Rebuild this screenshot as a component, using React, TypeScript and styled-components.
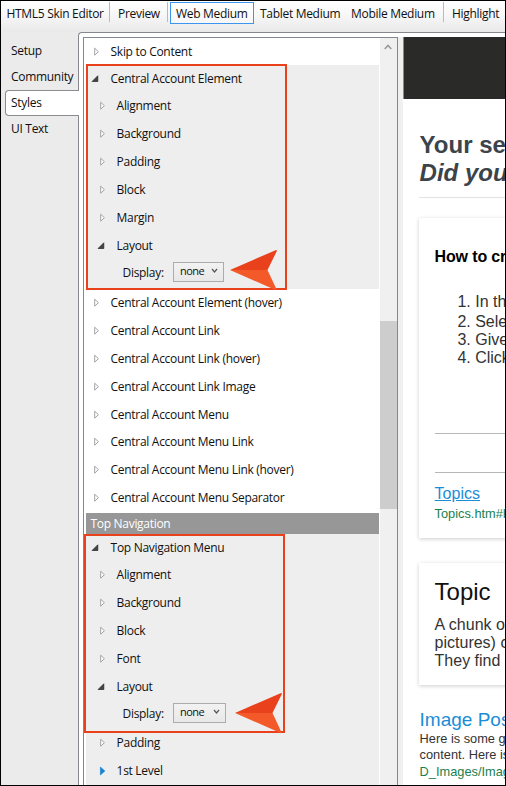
import React from "react";
import styled, { createGlobalStyle } from "styled-components";

const Global = createGlobalStyle`
  * { box-sizing: border-box; }
  body { margin: 0; background: #fff; overflow: hidden; }
`;

const Window = styled.div`
  position: relative;
  width: 506px;
  height: 786px;
  border: 1px solid #000;
  background: #ebebeb;
  overflow: hidden;
  display: flex;
  flex-direction: column;
  font: 12px/16px "Open Sans", "Noto Sans", sans-serif;
  color: #101010;
`;

const Toolbar = styled.div`
  display: flex;
  flex: none;
  height: 31px;
  padding: 1px 0 0 1px;
  background: linear-gradient(#fff, #f7f7f7 45%, #e9e9e9);
`;

const ToolItem = styled.div<{ $w: number; $active?: boolean; $sep?: boolean; $pad: number }>`
  flex: none;
  width: ${(p) => p.$w}px;
  height: ${(p) => (p.$active ? 22 : 20)}px;
  padding-left: ${(p) => p.$pad}px;
  padding-top: ${(p) => (p.$active ? 3 : 4)}px;
  border: ${(p) => (p.$active ? "1px solid #3c96f0" : "none")};
  border-right: ${(p) => (p.$active ? "1px solid #3c96f0" : p.$sep ? "1px solid #b6bbc1" : "none")};
  background: ${(p) => (p.$active ? "linear-gradient(#fff, #f7f7f7)" : "none")};
  white-space: nowrap;
`;

const ToolGap = styled.div`
  flex: none;
  width: 2px;
`;

const Text = styled.span<{ $ls: number }>`
  letter-spacing: ${(p) => p.$ls}px;
  white-space: nowrap;
`;

const Body = styled.div`
  display: flex;
  flex: 1;
  min-height: 0;
`;

const Tabs = styled.div`
  flex: none;
  width: 77px;
  padding: 6px 0 0 4px;
`;

const Tab = styled.div<{ $active?: boolean }>`
  position: relative;
  z-index: 1;
  height: 26px;
  width: ${(p) => (p.$active ? 74 : 73)}px;
  padding: ${(p) => (p.$active ? "4px 0 0 5px" : "5px 0 0 6px")};
  border: ${(p) => (p.$active ? "1px solid #8b8c90" : "none")};
  border-right: none;
  border-radius: 4px 0 0 4px;
  background: ${(p) => (p.$active ? "#fff" : "none")};
`;

const Content = styled.div`
  flex: 1;
  display: flex;
  min-width: 0;
  padding: 4px 0 0 4px;
  border-top: 1px solid #85878c;
  border-left: 1px solid #85878c;
  border-top-left-radius: 4px;
  background: #fff;
`;

const Tree = styled.div`
  flex: none;
  display: flex;
  width: 315px;
  border: 1px solid #828790;
  border-bottom: none;
  background: #fff;
`;

const TreeList = styled.div`
  flex: none;
  width: 295px;
  padding-left: 2px;
`;

const Row = styled.div<{ $h: number; $level: number; $shade?: boolean }>`
  display: flex;
  align-items: center;
  height: ${(p) => p.$h}px;
  padding-left: ${(p) => (p.$level === 1 ? 5 : 11)}px;
  background: ${(p) => (p.$shade ? "#eee" : "#fff")};
`;

const Marker = styled.svg`
  flex: none;
  width: 10px;
  height: 10px;
  margin-right: 9.6px;
`;

const Header = styled.div`
  height: 21px;
  margin-top: 1px;
  padding: 3px 0 0 4.5px;
  background: #979797;
  color: #fff;
`;

const FieldRow = styled.div<{ $h: number }>`
  display: flex;
  height: ${(p) => p.$h}px;
  padding: 2px 0 0 36.5px;
  background: #eee;
`;

const FieldLabel = styled.div`
  width: 50.5px;
  padding-top: 3px;
`;

const Select = styled.div<{ $w: number }>`
  display: flex;
  justify-content: space-between;
  width: ${(p) => p.$w}px;
  height: 20px;
  padding: 0 5px 0 6px;
  border: 1px solid #acacac;
  background: linear-gradient(#f2f2f2, #e8e8e8);
  font-size: 11px;
`;

const Chevron = styled.svg`
  width: 7px;
  height: 6px;
  margin-top: 5px;
`;

const Scrollbar = styled.div`
  flex: none;
  width: 18px;
  padding: 6px 0 0 1px;
  border-left: 1px solid #fff;
  background: #f0f0f0;
`;

const ScrollArrow = styled.svg`
  display: block;
  width: 8px;
  height: 6px;
  margin-left: 3px;
`;

const Thumb = styled.div`
  width: 17px;
  height: 188px;
  margin: 271px 0 0 -1px;
  background: #cdcdcd;
`;

const Splitter = styled.div`
  flex: none;
  width: 5px;
  background: #f0f0f0;
`;

const Preview = styled.div`
  flex: 1;
  min-width: 0;
  overflow: hidden;
  background: #fff;
  font-family: "Liberation Sans", Arial, sans-serif;
  color: #333;
  white-space: nowrap;
`;

const Banner = styled.div`
  height: 62px;
  border-left: 1px solid #8a8a8a;
  background: #2a2a28;
`;

const Page = styled.div`
  width: 300px;
  padding: 32px 0 0 16px;
`;

const Title = styled.h1`
  margin: 0;
  padding: 0 0 10px 0.6px;
  border-bottom: 1px solid #e2e2e2;
  color: #3b444b;
  font-size: 24px;
  line-height: 28px;
`;

const Card = styled.div<{ $h: number; $mt: number; $pt: number }>`
  height: ${(p) => p.$h}px;
  margin-top: ${(p) => p.$mt}px;
  padding: ${(p) => p.$pt}px 0 0 15.6px;
  background: #fff;
  box-shadow: 0 1px 4px rgba(0, 0, 0, 0.2);
`;

const Heading = styled.div`
  color: #000;
  font-size: 16px;
  line-height: 18px;
  font-weight: bold;
  letter-spacing: -0.15px;
`;

const Steps = styled.ol`
  margin: 27px 0 0;
  padding-left: 40.6px;
  font-size: 16px;
  line-height: 18px;
  li:first-child { padding-bottom: 2px; }
`;

const Rule = styled.div<{ $mt: number }>`
  height: 1px;
  margin-top: ${(p) => p.$mt}px;
  background: #b4b8bb;
`;

const Link = styled.div`
  margin-top: 12px;
  color: #1b8dd6;
  font-size: 16px;
  line-height: 18px;
  text-decoration: underline;
`;

const Path = styled.div<{ $mt: number }>`
  margin-top: ${(p) => p.$mt}px;
  color: #1a8050;
  font-size: 12.8px;
  line-height: 16px;
`;

const TopicTitle = styled.div`
  color: #111;
  font-size: 24px;
  line-height: 28px;
`;

const Paragraph = styled.div<{ $size: number; $lh: number; $mt: number }>`
  margin-top: ${(p) => p.$mt}px;
  font-size: ${(p) => p.$size}px;
  line-height: ${(p) => p.$lh}px;
`;

const Result = styled.div`
  padding: 24px 0 0 0.6px;
`;

const ResultTitle = styled.div`
  color: #1b8dd6;
  font-size: 19px;
  line-height: 22px;
`;

const Highlight = styled.div<{ $x: number; $y: number; $h: number }>`
  position: absolute;
  z-index: 2;
  left: ${(p) => p.$x}px;
  top: ${(p) => p.$y}px;
  width: 201px;
  height: ${(p) => p.$h}px;
  border: 2px solid #e8411b;
`;

const Arrow = styled.svg<{ $x: number; $y: number }>`
  position: absolute;
  left: ${(p) => p.$x}px;
  top: ${(p) => p.$y}px;
  width: 50px;
  height: 42px;
`;

type Kind = "closed" | "open" | "active";

const Expander = ({ kind }: { kind: Kind }) => (
  <Marker viewBox="0 0 10 10">
    {kind === "open" ? (
      <path d="M6.8 1.8V7.5H1.1z" fill="#444" stroke="#222" strokeWidth=".7" />
    ) : kind === "active" ? (
      <path d="M3.4 1v8l4.5-4z" fill="#1583d0" stroke="#1583d0" strokeWidth=".6" />
    ) : (
      <path d="M3.7 1.2v7L7.4 4.7z" fill="#fff" stroke="#a3a3a3" strokeWidth="1" />
    )}
  </Marker>
);

interface ItemProps { label: string; h?: number; level?: number; shade?: boolean; kind?: Kind }

const Item = ({ label, h = 28, level = 1, shade, kind = "closed" }: ItemProps) => (
  <Row $h={h} $level={level} $shade={shade}>
    <Expander kind={kind} />
    <Text $ls={-0.3}>{label}</Text>
  </Row>
);

const DisplayField = ({ h, w }: { h: number; w: number }) => (
  <FieldRow $h={h}>
    <FieldLabel><Text $ls={-0.3}>Display:</Text></FieldLabel>
    <Select $w={w}>
      <Text $ls={-0.5}>none</Text>
      <Chevron viewBox="0 0 7 6"><path d="M1 1l2.5 3L6 1" fill="none" stroke="#555" strokeWidth="1.2" /></Chevron>
    </Select>
  </FieldRow>
);

const Pointer = ({ x, y }: { x: number; y: number }) => (
  <Arrow $x={x} $y={y} viewBox="0 0 50 42">
    <path d="M1 21L46.5 1.2q2-.5 1 1.5L38.5 21z" fill="#e8411b" />
    <path d="M1 21L46 40.8q2 .3 1-1.6L38.5 21z" fill="#f4592a" />
  </Arrow>
);

const tools = [
  { label: "HTML5 Skin Editor", w: 108, pad: 4.5, sep: true },
  { label: "Preview", w: 58, pad: 8, sep: true },
  { label: "Web Medium", w: 84, pad: 5, active: true },
  { label: "Tablet Medium", w: 92, pad: 6 },
  { label: "Mobile Medium", w: 98, pad: 5, sep: true },
  { label: "Highlight", w: 60, pad: 8 },
];

const accountRows: ItemProps[] = [
  { label: "Central Account Element (hover)" },
  { label: "Central Account Link" },
  { label: "Central Account Link (hover)" },
  { label: "Central Account Link Image" },
  { label: "Central Account Menu", h: 27 },
  { label: "Central Account Menu Link" },
  { label: "Central Account Menu Link (hover)" },
  { label: "Central Account Menu Separator" },
];

export default function App() {
  return (
    <>
      <Global />
      <Window>
        <Toolbar>
          {tools.map((t) => (
            <React.Fragment key={t.label}>
              {t.active && <ToolGap />}
              <ToolItem $w={t.w} $pad={t.pad} $sep={t.sep} $active={t.active}>
                <Text $ls={-0.3}>{t.label}</Text>
              </ToolItem>
            </React.Fragment>
          ))}
        </Toolbar>
        <Body>
          <Tabs>
            <Tab><Text $ls={-0.3}>Setup</Text></Tab>
            <Tab><Text $ls={-0.3}>Community</Text></Tab>
            <Tab $active><Text $ls={-0.3}>Styles</Text></Tab>
            <Tab><Text $ls={-0.3}>UI Text</Text></Tab>
          </Tabs>
          <Content>
            <Tree>
              <TreeList>
                <Item label="Skip to Content" h={27} />
                <Item label="Central Account Element" h={27} shade kind="open" />
                {["Alignment", "Background", "Padding", "Block", "Margin"].map((l) => (
                  <Item key={l} label={l} level={2} shade />
                ))}
                <Item label="Layout" level={2} shade kind="open" />
                <DisplayField h={29} w={51} />
                {accountRows.map((r) => <Item key={r.label} {...r} />)}
                <Header><Text $ls={-0.3}>Top Navigation</Text></Header>
                <Item label="Top Navigation Menu" h={27} shade kind="open" />
                {["Alignment", "Background", "Block", "Font"].map((l) => (
                  <Item key={l} label={l} level={2} shade />
                ))}
                <Item label="Layout" level={2} shade kind="open" />
                <DisplayField h={28} w={53} />
                <Item label="Padding" level={2} shade />
                <Item label="1st Level" level={2} shade kind="active" />
              </TreeList>
              <Scrollbar>
                <ScrollArrow viewBox="0 0 8 6"><path d="M.7 5L4 1.4 7.3 5" fill="none" stroke="#999" strokeWidth="1.5" /></ScrollArrow>
                <Thumb />
              </Scrollbar>
            </Tree>
            <Splitter />
            <Preview>
              <Banner />
              <Page>
                <Title>Your se<br /><i>Did you</i></Title>
                <Card $h={320} $mt={20} $pt={30}>
                  <Heading>How to cr</Heading>
                  <Steps>
                    <li>In th</li><li>Sele</li><li>Give</li><li>Click</li>
                  </Steps>
                  <Rule $mt={66} />
                  <Rule $mt={38} />
                  <Link>Topics</Link>
                  <Path $mt={3}>Topics.htm#H</Path>
                </Card>
                <Card $h={122} $mt={25} $pt={15}>
                  <TopicTitle>Topic</TopicTitle>
                  <Paragraph $size={16} $lh={18} $mt={10}>A chunk o<br />pictures) c<br />They find</Paragraph>
                </Card>
                <Result>
                  <ResultTitle>Image Pos</ResultTitle>
                  <Paragraph $size={12.8} $lh={16} $mt={0}>Here is some g<br />content. Here is</Paragraph>
                  <Path $mt={1}>D_Images/Imag</Path>
                </Result>
              </Page>
            </Preview>
          </Content>
        </Body>
        <Highlight $x={85} $y={63} $h={226}><Pointer x={141} y={183} /></Highlight>
        <Highlight $x={83} $y={533} $h={199}><Pointer x={148} y={156} /></Highlight>
      </Window>
    </>
  );
}
